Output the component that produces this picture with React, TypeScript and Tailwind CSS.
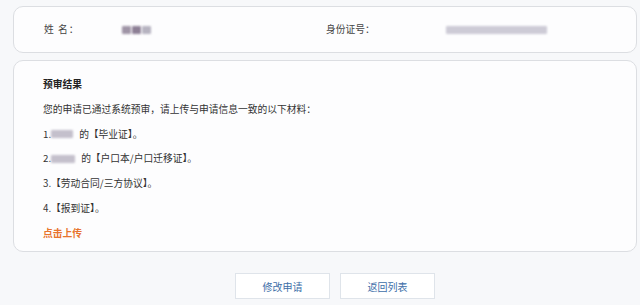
import React from "react";

const FONT = { fontFamily: '"Noto Sans CJK SC", "Noto Sans", sans-serif' };

function Blur({ w, tone = "bg-[#b9b6c4]" }: { w: string; tone?: string }) {
  return <span className={`inline-block h-[8px] align-middle rounded-[1px] blur-[1.2px] ${w} ${tone}`} />;
}

export default function App() {
  return (
    <div className="w-[640px] h-[305px] bg-[#f7f8fa] overflow-hidden text-[#333]" style={FONT}>
      <div className="pl-[13px] pr-[3px] pt-[6px]">
        <div className="h-[47px] rounded-[10px] border border-[#dcdee2] bg-[#fdfdfe] flex items-center text-[9.75px] text-[#444]">
          <span className="ml-[30px] w-[78px] tracking-[1px]">姓 名：</span>
          <span className="inline-flex gap-[1px]">
            <Blur w="w-[9px]" tone="bg-[#9f94a6]" />
            <Blur w="w-[9px]" tone="bg-[#8d7f95]" />
            <Blur w="w-[9px]" tone="bg-[#b6b3c0]" />
          </span>
          <span className="ml-[175px] w-[120px]">身份证号：</span>
          <Blur w="w-[101px]" tone="bg-[#cdcbd6]" />
        </div>

        <div className="mt-[7px] h-[192px] rounded-[10px] border border-[#dcdee2] bg-[#fdfdfe] pl-[29px] pt-[11px] text-[9.75px] leading-[24.8px]">
          <div className="font-bold text-[#222]">预审结果</div>
          <div>您的申请已通过系统预审，请上传与申请信息一致的以下材料：</div>
          <div className="flex items-center">
            1.<Blur w="w-[22px]" tone="bg-[#c4c0cc]" /><span className="ml-[6px]">的【毕业证】。</span>
          </div>
          <div className="flex items-center">
            2.<Blur w="w-[24px]" tone="bg-[#c4c0cc]" /><span className="ml-[6px]">的【户口本/户口迁移证】。</span>
          </div>
          <div>3.【劳动合同/三方协议】。</div>
          <div>4.【报到证】。</div>
          <div className="font-bold text-[#e8742e]">点击上传</div>
        </div>

        <div className="flex justify-center gap-[10px] pt-[21px] pl-[20px]">
          <button className="w-[95px] h-[26px] border border-[#dfe4ea] bg-white text-[10px] text-[#3d6ea8]">修改申请</button>
          <button className="w-[95px] h-[26px] border border-[#dfe4ea] bg-white text-[10px] text-[#3d6ea8]">返回列表</button>
        </div>
      </div>
    </div>
  );
}
